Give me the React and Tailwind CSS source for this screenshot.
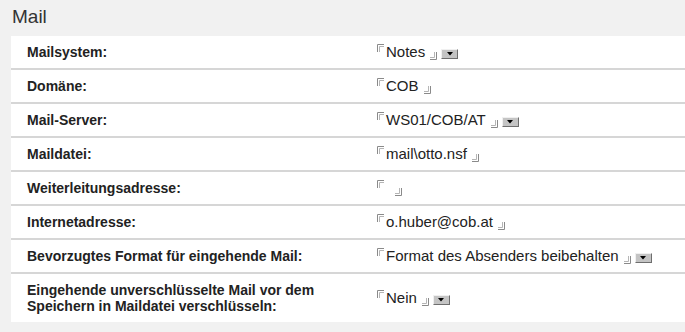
import React from 'react';

const rows = [
    { label: 'Mailsystem:', value: 'Notes', dropdown: true },
    { label: 'Domäne:', value: 'COB' },
    { label: 'Mail-Server:', value: 'WS01/COB/AT', dropdown: true },
    { label: 'Maildatei:', value: 'mail\\otto.nsf' },
    { label: 'Weiterleitungsadresse:', value: '' },
    { label: 'Internetadresse:', value: 'o.huber@cob.at' },
    { label: 'Bevorzugtes Format für eingehende Mail:', value: 'Format des Absenders beibehalten', dropdown: true },
    { label: 'Eingehende unverschlüsselte Mail vor dem Speichern in Maildatei verschlüsseln:', value: 'Nein', dropdown: true, tall: true },
];

// Notes field delimiters
const OpenMark = () => (
    <svg width="7" height="8" viewBox="0 0 7 8" className="self-start mt-[1px] mr-[2px] shrink-0">
        <path d="M0.5 8V0.5H7" fill="none" stroke="#8a8a8a" strokeWidth="1" />
        <path d="M2.5 8V2.5H7" fill="none" stroke="#b5b5b5" strokeWidth="1" />
    </svg>
);

const CloseMark = () => (
    <svg width="7" height="8" viewBox="0 0 7 8" className="self-end mb-[1px] ml-[5px] shrink-0">
        <path d="M0 7.5H6.5V0" fill="none" stroke="#8a8a8a" strokeWidth="1" />
        <path d="M0 5.5H4.5V0" fill="none" stroke="#b5b5b5" strokeWidth="1" />
    </svg>
);

const DropButton = () => (
    <span className="ml-[4px] mt-[3px] w-[17px] h-[10px] bg-[#c4c4c4] border-t border-l border-[#f0f0f0] border-r border-b border-r-[#6e6e6e] border-b-[#6e6e6e] flex items-center justify-center">
        <svg width="6" height="4" viewBox="0 0 6 4">
            <path d="M0 0H6L3 3.5Z" fill="#000" />
        </svg>
    </span>
);

export default function App() {
    return (
        <div className="w-[685px] h-[332px] bg-[#f1f1f1] pl-[11px] overflow-hidden font-['Liberation_Sans',Arial,sans-serif]">
            <h1 className="text-[19px] text-[#333] leading-none pt-[7px] pl-[1px] h-[36px]">Mail</h1>
            <div className="bg-white">
                {rows.map((row, i) => (
                    <div
                        key={i}
                        className={`flex items-center ${i === 0 ? 'h-[32px]' : 'border-t-2 border-[#d6d6d6]'} ${i > 0 && !row.tall ? 'h-[34px]' : ''} ${row.tall ? 'h-[50px]' : ''}`}
                    >
                        <div className="w-[366px] pl-[16px] pr-4 text-[14px] font-bold text-[#222] leading-[16px]">
                            {row.tall ? (
                                <>Eingehende unverschlüsselte Mail vor dem<br />Speichern in Maildatei verschlüsseln:</>
                            ) : row.label}
                        </div>
                        <div className="flex items-center text-[15px] text-[#222] leading-[18px]">
                            <span className="flex h-[18px]">
                                <OpenMark />
                                <span className={row.value ? '' : 'w-[4px]'}>{row.value}</span>
                                <CloseMark />
                            </span>
                            {row.dropdown && <DropButton />}
                        </div>
                    </div>
                ))}
            </div>
        </div>
    );
}
